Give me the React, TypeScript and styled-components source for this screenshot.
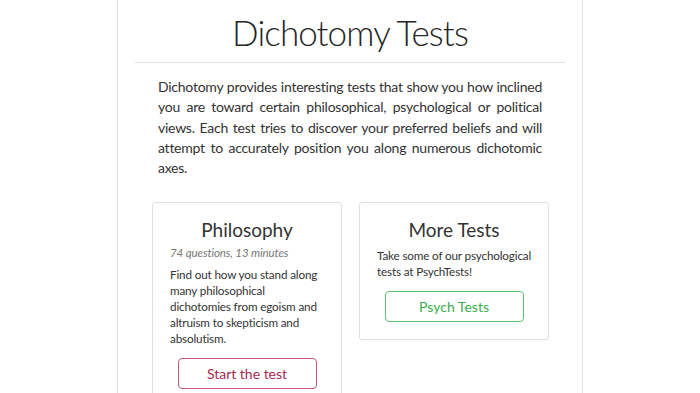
import React from "react";
import styled, { createGlobalStyle } from "styled-components";

const Global = createGlobalStyle`
  html, body { margin: 0; padding: 0; background: #fff; }
  body { font-family: Lato, "Open Sans", sans-serif; color: #333; }
  * { box-sizing: border-box; }
`;

const Page = styled.div`
  width: 466px;
  min-height: 393px;
  margin: 0 auto;
  border-left: 1px solid #e3e3e3;
  border-right: 1px solid #e3e3e3;
  background: #fff;
`;

const Header = styled.header`
  margin: 0 17px;
  padding: 9px 0 7px;
  border-bottom: 1px solid #e2e2e2;
  text-align: center;
`;

const Title = styled.h1`
  margin: 0;
  font-size: 35px;
  font-weight: 300;
  letter-spacing: -0.9px;
  line-height: 46px;
  color: #252525;
`;

const Intro = styled.p`
  margin: 14px 40px 0;
  font-size: 14px;
  line-height: 20.3px;
  letter-spacing: -0.25px;
  color: #333;
`;

const IntroLine = styled.span<{ $last?: boolean }>`
  display: block;
  white-space: nowrap;
  text-align: ${(p) => (p.$last ? "left" : "justify")};
  text-align-last: ${(p) => (p.$last ? "left" : "justify")};
`;

const Cards = styled.div`
  display: grid;
  grid-template-columns: 190px 190px;
  gap: 17px;
  align-items: start;
  margin: 24px 35px 0 34px;
`;

const Card = styled.section`
  border: 1px solid #e0e0e0;
  border-radius: 3px;
  padding: 14px 17px 17px;
  display: flex;
  flex-direction: column;
`;

const CardTitle = styled.h2`
  margin: 0;
  text-align: center;
  font-size: 19px;
  font-weight: 400;
  line-height: 26px;
  color: #333;
`;

const Meta = styled.div`
  font-size: 11.5px;
  font-style: italic;
  color: #777;
  line-height: 16px;
  margin-top: 2px;
  margin-bottom: 1px;
  letter-spacing: -0.1px;
`;

const Text = styled.p`
  margin: 4px 0 0;
  font-size: 11.7px;
  line-height: 16px;
  letter-spacing: -0.15px;
  white-space: nowrap;
  color: #333;
`;

const Button = styled.a<{ $tone: "red" | "green" }>`
  align-self: center;
  display: block;
  width: 139px;
  height: 31px;
  margin-top: 12px;
  border: 1px solid ${(p) => (p.$tone === "red" ? "#c2557b" : "#5cc46e")};
  border-radius: 4px;
  text-align: center;
  line-height: 29px;
  font-size: 14px;
  text-decoration: none;
  color: ${(p) => (p.$tone === "red" ? "#a8284f" : "#3aae4c")};
`;

const introLines = [
  "Dichotomy provides interesting tests that show you how inclined",
  "you are toward certain philosophical, psychological or political",
  "views. Each test tries to discover your preferred beliefs and will",
  "attempt to accurately position you along numerous dichotomic",
  "axes.",
];

export default function App() {
  return (
    <>
      <Global />
      <Page>
        <Header>
          <Title>Dichotomy Tests</Title>
        </Header>
        <Intro>
          {introLines.map((l, i) => (
            <IntroLine key={i} $last={i === introLines.length - 1}>
              {l}
            </IntroLine>
          ))}
        </Intro>
        <Cards>
          <Card>
            <CardTitle>Philosophy</CardTitle>
            <Meta>74 questions, 13 minutes</Meta>
            <Text>
              Find out how you stand along
              <br />
              many philosophical
              <br />
              dichotomies from egoism and
              <br />
              altruism to skepticism and
              <br />
              absolutism.
            </Text>
            <Button $tone="red" href="#">Start the test</Button>
          </Card>
          <Card>
            <CardTitle>More Tests</CardTitle>
            <Text>
              Take some of our psychological
              <br />
              tests at PsychTests!
            </Text>
            <Button $tone="green" href="#">Psych Tests</Button>
          </Card>
        </Cards>
      </Page>
    </>
  );
}
